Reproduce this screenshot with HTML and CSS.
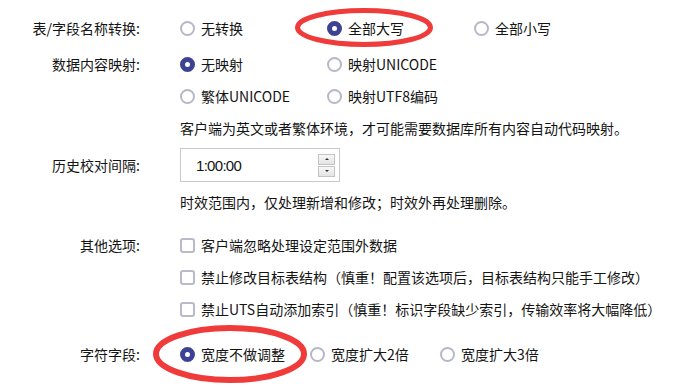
FILE: index.html
```html
<!DOCTYPE html>
<html lang="zh-CN">
<head>
  <meta charset="UTF-8">
  <title>同步选项</title>
  <link rel="stylesheet" href="styles.css">
</head>
<body>
  <div class="page">
    <div class="form">
      <div class="row row-first">
        <div class="label">表/字段名称转换:</div>
        <div class="field">
          <div class="line">
            <span class="opt opt-wide"><span class="radio"></span>无转换</span>
            <span class="opt opt-wide"><span class="radio checked"></span>全部大写</span>
            <span class="opt"><span class="radio"></span>全部小写</span>
          </div>
        </div>
      </div>

      <div class="row row-map">
        <div class="label">数据内容映射:</div>
        <div class="field">
          <div class="line">
            <span class="opt opt-wide"><span class="radio checked"></span>无映射</span>
            <span class="opt"><span class="radio"></span>映射UNICODE</span>
          </div>
          <div class="line">
            <span class="opt opt-wide"><span class="radio"></span>繁体UNICODE</span>
            <span class="opt"><span class="radio"></span>映射UTF8编码</span>
          </div>
          <div class="line note">客户端为英文或者繁体环境，才可能需要数据库所有内容自动代码映射。</div>
        </div>
      </div>

      <div class="row row-time">
        <div class="label">历史校对间隔:</div>
        <div class="field">
          <div class="spin-box">
            <span class="spin-value">1:00:00</span>
            <span class="spin-buttons">
              <span class="spin-btn"><span class="arrow-up"></span></span>
              <span class="spin-btn"><span class="arrow-down"></span></span>
            </span>
          </div>
        </div>
      </div>

      <div class="row row-note">
        <div class="label"></div>
        <div class="field">
          <div class="line note">时效范围内，仅处理新增和修改；时效外再处理删除。</div>
        </div>
      </div>

      <div class="row row-other">
        <div class="label">其他选项:</div>
        <div class="field">
          <div class="line"><span class="opt"><span class="check"></span>客户端忽略处理设定范围外数据</span></div>
          <div class="line"><span class="opt"><span class="check"></span>禁止修改目标表结构（慎重！配置该选项后，目标表结构只能手工修改）</span></div>
          <div class="line"><span class="opt"><span class="check"></span>禁止UTS自动添加索引（慎重！标识字段缺少索引，传输效率将大幅降低）</span></div>
        </div>
      </div>

      <div class="row row-char">
        <div class="label">字符字段:</div>
        <div class="field">
          <div class="line">
            <span class="opt opt-mid"><span class="radio checked"></span>宽度不做调整</span>
            <span class="opt opt-mid"><span class="radio"></span>宽度扩大2倍</span>
            <span class="opt"><span class="radio"></span>宽度扩大3倍</span>
          </div>
        </div>
      </div>
    </div>

    <!-- hand-drawn annotation marks -->
    <svg class="marks" width="674" height="388" viewBox="0 0 674 388">
      <ellipse cx="364" cy="27.5" rx="66.5" ry="17" fill="none" stroke="#f03b3b" stroke-width="5"/>
      <ellipse cx="230" cy="354" rx="74" ry="26" fill="none" stroke="#f03b3b" stroke-width="6"/>
    </svg>
  </div>
</body>
</html>
```

FILE: styles.css
```css
body {
  margin: 0;
  background: #fff;
  color: #141414;
  font-family: "Noto Sans CJK SC", "Noto Sans", sans-serif;
  font-size: 14px;
}
.page {
  position: relative;
  width: 674px;
  height: 388px;
  overflow: hidden;
}
.form {
  padding-top: 12px;
}
.row {
  display: grid;
  grid-template-columns: 140px 1fr;
  column-gap: 40px;
}
.label {
  text-align: right;
  height: 32px;
  line-height: 32px;
  white-space: nowrap;
}
.line {
  display: flex;
  align-items: center;
  height: 32px;
  white-space: nowrap;
}
.row-map {
  margin-top: 4px;
}
.row-time {
  margin-top: 4px;
}
.row-time .label {
  height: 34px;
  line-height: 34px;
}
.row-note {
  margin-top: 4px;
}
.row-other {
  margin-top: 11px;
}
.row-char {
  margin-top: 13px;
}
.opt {
  display: inline-flex;
  align-items: center;
  gap: 6px;
}
.opt-wide {
  width: 147px;
}
.opt-mid {
  width: 130px;
}
.radio {
  box-sizing: border-box;
  width: 15px;
  height: 15px;
  border: 2px solid #b7b7c7;
  border-radius: 50%;
  flex: none;
}
.radio.checked {
  border: 5px solid #3e4293;
  background: #fff;
}
.check {
  box-sizing: border-box;
  width: 15px;
  height: 15px;
  border: 2px solid #b9b9c9;
  border-radius: 3px;
  flex: none;
}
.spin-box {
  box-sizing: border-box;
  width: 160px;
  height: 34px;
  border: 1px solid #c9c9c9;
  display: flex;
  align-items: center;
  justify-content: space-between;
  padding: 0 4px 0 15px;
}
.spin-value {
  font-family: "Liberation Sans", sans-serif;
  font-size: 15px;
  letter-spacing: -0.7px;
}
.spin-buttons {
  display: flex;
  flex-direction: column;
  gap: 1px;
}
.spin-btn {
  box-sizing: border-box;
  width: 17px;
  height: 11px;
  border: 1px solid #c4c4c4;
  background: linear-gradient(#f7f7f7, #e4e4e4);
  display: flex;
  align-items: center;
  justify-content: center;
}
.arrow-up {
  width: 0;
  height: 0;
  border-left: 2px solid transparent;
  border-right: 2px solid transparent;
  border-bottom: 2px solid #333;
}
.arrow-down {
  width: 0;
  height: 0;
  border-left: 2px solid transparent;
  border-right: 2px solid transparent;
  border-top: 2px solid #333;
}
.marks {
  position: absolute;
  left: 0;
  top: 0;
  pointer-events: none;
}
```
